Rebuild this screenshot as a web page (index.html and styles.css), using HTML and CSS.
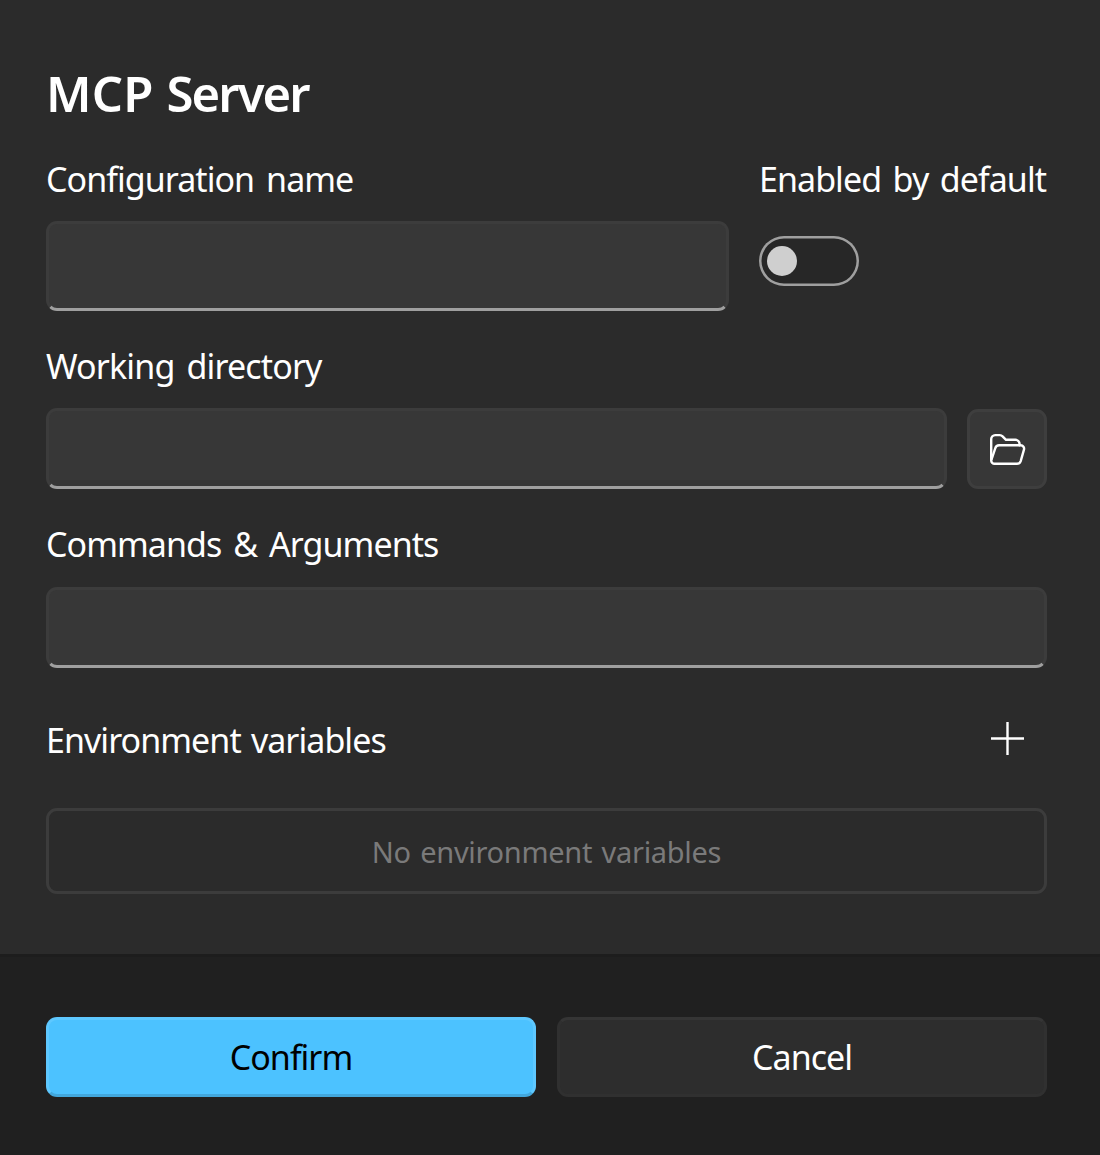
FILE: index.html
```html
<!DOCTYPE html>
<html lang="en">
<head>
<meta charset="utf-8">
<title>MCP Server</title>
<link rel="stylesheet" href="styles.css">
</head>
<body>
<form class="dialog">
  <main class="content">
    <h1 class="title">MCP <span class="t-server">Server</span></h1>
    <div class="name-row">
      <div class="field">
        <label class="label t-name" for="name">Configuration name</label>
        <input class="input input-tall" id="name" type="text">
      </div>
      <div class="toggle-field">
        <span class="label t-enabled">Enabled by default</span>
        <button class="toggle" type="button" role="switch" aria-checked="false" aria-label="Enabled by default"><span class="knob"></span></button>
      </div>
    </div>
    <label class="label label-dir" for="dir">Working directory</label>
    <div class="dir-row">
      <input class="input" id="dir" type="text">
      <button class="browse" type="button" aria-label="Browse">
        <svg width="40" height="40" viewBox="0 -0.5 40 40" fill="none" stroke="#fff" stroke-width="2.4" stroke-linejoin="round" stroke-linecap="round">
          <path d="M4.200 30V9.600a4 4 0 0 1 4-4h4.600a4 4 0 0 1 2.800 1.200L19 10.300h9.400a4.200 4.200 0 0 1 4.200 4.200v1.200"/>
          <path d="M4.400 30.500L8.300 18.600a4 4 0 0 1 3.800-2.800h21.600a3.400 3.400 0 0 1 3.200 4.500L33.700 31.600a4 4 0 0 1-3.800 2.700H7.600a3.300 3.300 0 0 1-3.400-3.300"/>
        </svg>
      </button>
    </div>
    <label class="label label-cmd" for="cmd">Commands &amp; Arguments</label>
    <input class="input" id="cmd" type="text">
    <div class="env-row">
      <span class="label t-env">Environment variables</span>
      <button class="add" type="button" aria-label="Add variable">
        <svg width="33" height="33" viewBox="0 0 33 33" fill="none" stroke="#fff" stroke-width="2.4"><path d="M16.500 0v33M0 16.500h33"/></svg>
      </button>
    </div>
    <div class="empty">No environment variables</div>
  </main>
  <footer class="footer">
    <button class="btn primary" type="button">Confirm</button>
    <button class="btn secondary" type="button">Cancel</button>
  </footer>
</form>
</body>
</html>
```
FILE: styles.css
```css
* { box-sizing: border-box; }
body {
  margin: 0;
  background: #2b2b2b;
  color: #fff;
  font-family: "Noto Sans", sans-serif;
  font-size: 34px;
}
button, input { font: inherit; color: inherit; margin: 0; padding: 0; }
.dialog { height: 1155px; display: flex; flex-direction: column; }
.content { height: 954px; padding: 62px 53px 0 46px; display: flex; flex-direction: column; }
.title { margin: 0 0 31px; font-size: 49px; line-height: 62px; font-weight: 600; letter-spacing: 0.200px; }
.t-server { letter-spacing: -1.900px; }
.label {
  display: block;
  height: 48px;
  line-height: 48px;
  white-space: nowrap;
  letter-spacing: -0.950px;
  word-spacing: 4px;
}
.t-enabled { word-spacing: 3.600px; }
.t-env { word-spacing: 2.300px; }
.name-row { display: flex; justify-content: space-between; }
.field { width: 683px; display: flex; flex-direction: column; gap: 18px; }
.toggle-field { width: 288px; }
.input {
  display: block;
  width: 100%;
  height: 81px;
  border: 3px solid #3c3c3c;
  border-radius: 11px;
  border-bottom-color: #9f9f9f;
  background: #373737;
  outline: none;
}
.input-tall { height: 90px; }
.toggle {
  display: flex;
  align-items: center;
  width: 100px;
  height: 50px;
  margin-top: 33px;
  padding-left: 8px;
  border: 0;
  border-radius: 25px;
  background: #272727;
  box-shadow: inset 0 0 0 2.500px #9f9f9f;
}
.knob { width: 30px; height: 30px; border-radius: 50%; background: #cfcfcf; }
.label-dir { margin: 31px 0 18px; letter-spacing: -0.850px; }
.dir-row { display: flex; gap: 20px; align-items: flex-end; }
.browse {
  display: grid;
  place-items: center;
  flex: none;
  width: 80px;
  height: 80px;
  border: 3px solid #3e3e3e;
  border-radius: 11px;
  background: #373737;
}
.label-cmd { margin: 31px 0 19px; }
.env-row { display: flex; justify-content: space-between; margin-top: 48px; }
.add { width: 80px; height: 45px; padding-left: 1px; border: 0; background: none; display: grid; place-items: center; }
.empty {
  height: 86px;
  margin-top: 44px;
  border: 3px solid #3c3c3c;
  border-radius: 11px;
  display: flex;
  align-items: center;
  justify-content: center;
  color: #7a7a7a;
  font-size: 29px;
  letter-spacing: -0.300px;
  word-spacing: 2.200px;
}
.footer {
  flex: 1;
  padding: 60px 53px 0 46px;
  border-top: 3px solid #1d1d1d;
  background: #202020;
  display: grid;
  grid-template-columns: 490px 490px;
  gap: 21px;
  align-items: start;
}
.btn { height: 80px; border: 3px solid; border-radius: 11px; line-height: 48px; letter-spacing: -1px; }
.primary { background: #4cc2ff; color: #000; border-color: #5ec8ff #5ec8ff #42a7dc; }
.secondary { background: #2d2d2d; border-color: #353535 #303030 #303030; }
```
